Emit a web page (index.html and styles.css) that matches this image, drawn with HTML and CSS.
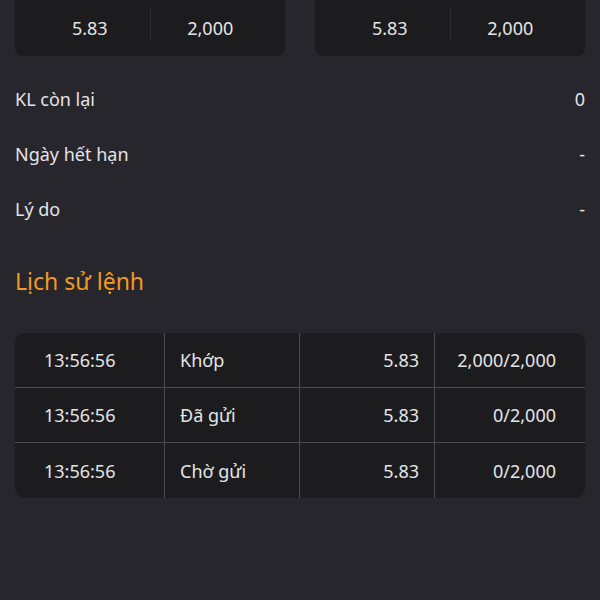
FILE: index.html
```html
<!DOCTYPE html>
<html lang="vi">
<head>
  <meta charset="UTF-8">
  <meta name="viewport" content="width=device-width, initial-scale=1.0">
  <title>Chi tiết lệnh</title>
  <link rel="stylesheet" href="styles.css">
</head>
<body>

  <!-- Giá / khối lượng -->
  <div class="price-row">
    <div class="price-card">
      <div class="price-cell">5.83</div>
      <span class="divider"></span>
      <div class="price-cell">2,000</div>
    </div>
    <div class="price-card">
      <div class="price-cell">5.83</div>
      <span class="divider"></span>
      <div class="price-cell">2,000</div>
    </div>
  </div>

  <!-- Thông tin -->
  <div class="info">
    <div class="info-row"><span>KL còn lại</span><span>0</span></div>
    <div class="info-row"><span>Ngày hết hạn</span><span>-</span></div>
    <div class="info-row"><span>Lý do</span><span>-</span></div>
  </div>

  <h2 class="section-title">Lịch sử lệnh</h2>

  <!-- Lịch sử lệnh -->
  <div class="history">
    <div class="cell time">13:56:56</div>
    <div class="cell status">Khớp</div>
    <div class="cell price">5.83</div>
    <div class="cell qty">2,000/2,000</div>

    <div class="cell time">13:56:56</div>
    <div class="cell status">Đã gửi</div>
    <div class="cell price">5.83</div>
    <div class="cell qty">0/2,000</div>

    <div class="cell time">13:56:56</div>
    <div class="cell status">Chờ gửi</div>
    <div class="cell price">5.83</div>
    <div class="cell qty">0/2,000</div>
  </div>

</body>
</html>
```

FILE: styles.css
```css
body {
  margin: 0;
  padding: 0 15px;
  background-color: #27262c;
  color: #e4e4e6;
  font-family: "Noto Sans", "Open Sans", sans-serif;
  font-size: 18px;
}
.price-row {
  display: flex;
  gap: 30px;
}
.price-card {
  flex: 1;
  display: flex;
  height: 56px;
  padding: 0 15px;
  background-color: #1c1c1f;
  border-radius: 0 0 8px 8px;
}
.price-cell {
  flex: 1;
  display: flex;
  align-items: center;
  justify-content: center;
}
.divider {
  width: 1px;
  height: 32px;
  margin-top: 8px;
  background-color: #2c2c31;
}
.info {
  margin-top: 15px;
}
.info-row {
  display: flex;
  justify-content: space-between;
  align-items: center;
  height: 55px;
}
.section-title {
  margin: 30px 0 37px;
  font-size: 23px;
  font-weight: normal;
  line-height: 30px;
  color: #f29a22;
}
.history {
  display: grid;
  grid-template-columns: 150px 135px 135px 150px;
  background-color: #1c1c1f;
  border-radius: 10px;
  overflow: hidden;
}
.cell {
  display: flex;
  align-items: center;
  height: 55px;
  box-sizing: border-box;
  border-bottom: 1px solid #4a4a50;
  border-right: 1px solid #4a4a50;
}
.cell:nth-last-child(-n+4) {
  border-bottom: none;
}
.time {
  padding-left: 29px;
}
.status {
  padding-left: 15px;
}
.price {
  justify-content: flex-end;
  padding-right: 15px;
}
.qty {
  justify-content: flex-end;
  padding-right: 29px;
  border-right: none;
}
```
